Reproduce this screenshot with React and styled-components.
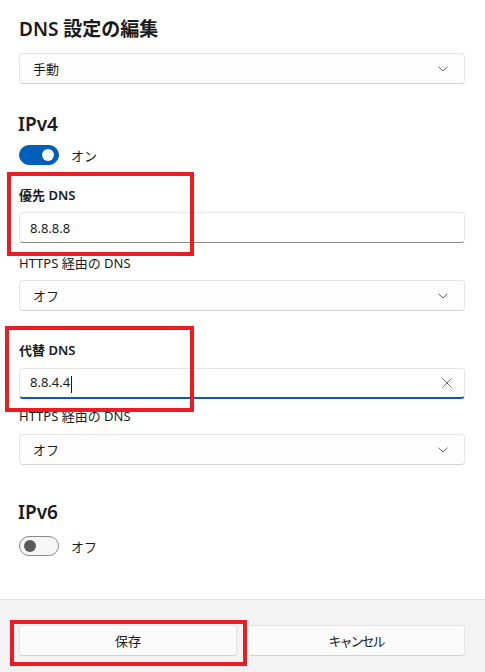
import React from "react";
import styled, { createGlobalStyle } from "styled-components";

const GlobalStyle = createGlobalStyle`
  html, body {
    margin: 0;
    padding: 0;
    background: #ffffff;
  }
  body {
    font-family: "Noto Sans", "Noto Sans CJK JP", sans-serif;
    color: #1a1a1a;
  }
`;

const Page = styled.div`
  width: 485px;
  height: 672px;
  display: flex;
  flex-direction: column;
  overflow: hidden;
`;

const Content = styled.div`
  flex: 1;
  padding: 15px 20px 0 19px;
  display: flex;
  flex-direction: column;
`;

const Title = styled.h1`
  margin: 0;
  font-size: 19px;
  line-height: 28px;
  font-weight: 600;
`;

const SectionTitle = styled.h2`
  margin: ${(p) => p.$top}px 0 0 -1px;
  font-size: 19px;
  line-height: 28px;
  font-weight: 600;
`;

const Select = styled.div`
  margin-top: ${(p) => p.$top}px;
  height: 31px;
  box-sizing: border-box;
  border: 1px solid #e5e5e5;
  border-bottom-color: #d4d4d4;
  border-radius: 4px;
  background: #fdfdfd;
  display: flex;
  align-items: center;
  justify-content: space-between;
  padding: 0 16px 0 13px;
  font-size: 13px;
`;

const Chevron = () => (
  <svg width="10" height="6" viewBox="0 0 10 6">
    <path d="M0.5 0.8 L5 5 L9.5 0.8" fill="none" stroke="#5f5f5f" strokeWidth="1" />
  </svg>
);

const ClearIcon = () => (
  <svg width="10" height="10" viewBox="0 0 10 10">
    <path d="M0.5 0.5 L9.5 9.5 M9.5 0.5 L0.5 9.5" fill="none" stroke="#6a6a6a" strokeWidth="1" />
  </svg>
);

const ToggleRow = styled.div`
  margin-top: ${(p) => p.$top}px;
  display: flex;
  align-items: center;
  gap: 12px;
  font-size: 13px;
  height: 20px;
`;

const Track = styled.div`
  width: 40px;
  height: 20px;
  box-sizing: border-box;
  border-radius: 10px;
  display: flex;
  align-items: center;
  padding: 0 4px;
  justify-content: ${(p) => (p.$on ? "flex-end" : "flex-start")};
  background: ${(p) => (p.$on ? "#005fb8" : "#f6f6f6")};
  border: 1px solid ${(p) => (p.$on ? "#005fb8" : "#8a8a8a")};
`;

const Knob = styled.div`
  width: 12px;
  height: 12px;
  border-radius: 50%;
  background: ${(p) => (p.$on ? "#ffffff" : "#5b5b5b")};
`;

const FieldGroup = styled.div`
  position: relative;
  margin-top: ${(p) => p.$top}px;
`;

const Highlight = styled.div`
  position: absolute;
  left: ${(p) => p.$left}px;
  top: ${(p) => p.$topOff}px;
  width: ${(p) => p.$w}px;
  height: ${(p) => p.$h}px;
  border: 4px solid #ed1c24;
  box-sizing: border-box;
  pointer-events: none;
`;

const FieldLabel = styled.div`
  font-size: 13px;
  line-height: 20px;
  font-weight: ${(p) => (p.$bold ? 600 : 400)};
  margin-top: ${(p) => p.$top || 0}px;
`;

const Input = styled.div`
  margin-top: ${(p) => p.$top || 7}px;
  height: 31px;
  box-sizing: border-box;
  border: 1px solid #e5e5e5;
  border-bottom: ${(p) => (p.$focus ? "2px solid #005fb8" : "1px solid #8a8a8a")};
  border-radius: 4px;
  background: #ffffff;
  display: flex;
  align-items: center;
  justify-content: space-between;
  padding: 0 12px 0 10px;
  font-size: 13px;
`;

const Caret = styled.span`
  display: inline-block;
  width: 1px;
  height: 17px;
  background: #1a1a1a;
  vertical-align: middle;
  margin-left: 1px;
`;

const Footer = styled.div`
  height: 73px;
  background: #f3f3f3;
  border-top: 1px solid #e5e5e5;
  padding: 25px 20px 0 19px;
  box-sizing: border-box;
  display: grid;
  grid-template-columns: 1fr 1fr;
  gap: 10px;
  align-content: start;
`;

const Button = styled.button`
  height: 31px;
  border: 1px solid #e5e5e5;
  border-bottom-color: #d0d0d0;
  border-radius: 4px;
  background: #fbfbfb;
  font-family: "Noto Sans", "Noto Sans CJK JP", sans-serif;
  font-size: 13px;
  letter-spacing: ${(p) => p.$tight ? "-2px" : "0"};
  color: #1a1a1a;
  position: relative;
`;

export default function App() {
  return (
    <Page>
      <GlobalStyle />
      <Content>
        <Title>DNS 設定の編集</Title>
        <Select $top={10}>
          <span>手動</span>
          <Chevron />
        </Select>

        <SectionTitle $top={26}>IPv4</SectionTitle>
        <ToggleRow $top={7}>
          <Track $on>
            <Knob $on />
          </Track>
          <span>オン</span>
        </ToggleRow>

        <FieldGroup $top={20}>
          <Highlight $left={-12} $topOff={-13} $w={187} $h={84} />
          <FieldLabel $bold>優先 DNS</FieldLabel>
          <Input>
            <span>8.8.8.8</span>
          </Input>
        </FieldGroup>
        <FieldLabel $top={10}>HTTPS 経由の DNS</FieldLabel>
        <Select $top={7}>
          <span>オフ</span>
          <Chevron />
        </Select>

        <FieldGroup $top={29}>
          <Highlight $left={-14} $topOff={-14} $w={189} $h={86} />
          <FieldLabel $bold>代替 DNS</FieldLabel>
          <Input $focus $top={8}>
            <span>
              8.8.4.4
              <Caret />
            </span>
            <ClearIcon />
          </Input>
        </FieldGroup>
        <FieldLabel $top={7}>HTTPS 経由の DNS</FieldLabel>
        <Select $top={8}>
          <span>オフ</span>
          <Chevron />
        </Select>

        <SectionTitle $top={33}>IPv6</SectionTitle>
        <ToggleRow $top={10}>
          <Track>
            <Knob />
          </Track>
          <span>オフ</span>
        </ToggleRow>
      </Content>
      <Footer>
        <Button>
          保存
          <Highlight $left={-10} $topOff={-6} $w={237} $h={46} />
        </Button>
        <Button $tight>キャンセル</Button>
      </Footer>
    </Page>
  );
}
